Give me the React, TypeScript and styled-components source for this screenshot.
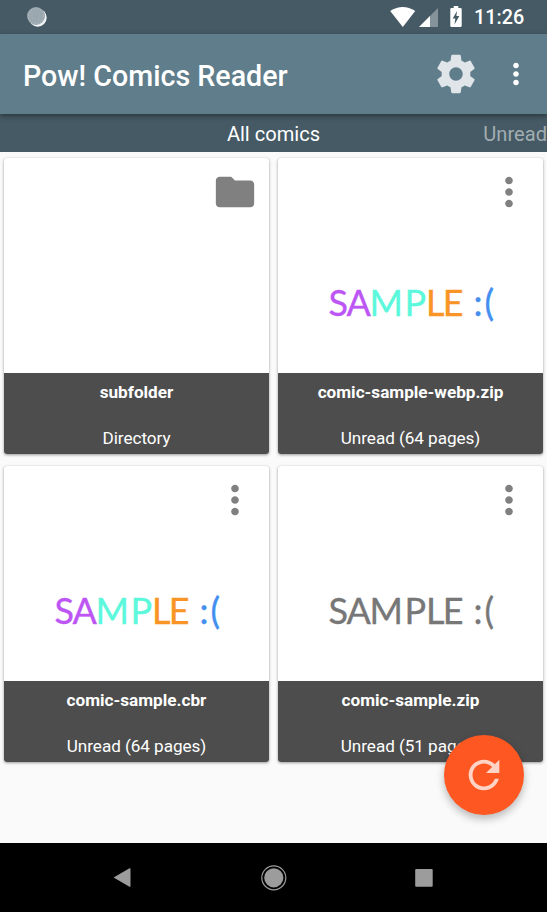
import React from 'react';
import styled, { createGlobalStyle } from 'styled-components';

const GlobalStyle = createGlobalStyle`
  * { box-sizing: border-box; }
  body { margin: 0; background: #fafafa; font-family: Roboto, sans-serif; overflow: hidden; }
  svg { display: block; }
`;

const Screen = styled.div`
  width: 547px;
  height: 912px;
  display: flex;
  flex-direction: column;
  background: #fafafa;
`;

const StatusBar = styled.header`
  height: 34px;
  flex: none;
  display: flex;
  align-items: center;
  padding: 0 23px 0 26px;
  background: #455a64;
  color: #fff;
`;

const StatusIcons = styled.div`
  margin-left: auto;
  display: flex;
`;

const Clock = styled.span`
  width: 50px;
  margin-left: 11px;
  font-size: 19.8px;
  font-weight: 500;
  line-height: 34px;
  white-space: nowrap;
  padding-top: 2px;
`;

const Toolbar = styled.div`
  height: 80px;
  flex: none;
  display: flex;
  align-items: center;
  padding: 0 14.5px 0 23px;
  background: #607d8b;
  color: #fff;
  box-shadow: 0 2px 5px rgba(0, 0, 0, 0.4);
  z-index: 1;
`;

const Title = styled.h1`
  margin: 4px auto 0 0;
  font-size: 28.65px;
  font-weight: 500;
  line-height: 36px;
  white-space: nowrap;
`;

const IconButton = styled.button<{ $gap?: number }>`
  border: 0;
  padding: 0;
  margin: 0 0 0 ${(p) => p.$gap ?? 0}px;
  background: none;
  color: inherit;
`;

const TabStrip = styled.nav`
  height: 38.4px;
  flex: none;
  display: grid;
  grid-template-columns: 1fr auto 1fr;
  align-items: center;
  background: #455a64;
  overflow: hidden;
`;

const Tab = styled.span<{ $active?: boolean }>`
  font-size: 20.1px;
  line-height: 24px;
  padding-top: 2px;
  white-space: nowrap;
  color: ${(p) => (p.$active ? '#fff' : '#a2adb2')};
  justify-self: end;
`;

const Library = styled.main`
  flex: 1;
  min-height: 0;
  display: grid;
  grid-template-columns: 265px 265px;
  grid-auto-rows: 296.4px;
  gap: 11.6px 9px;
  padding: 5.6px 4px 0;
`;

const Card = styled.article`
  display: flex;
  flex-direction: column;
  border-radius: 3px;
  overflow: hidden;
  background: #fff;
  box-shadow: 0 1px 3px rgba(0, 0, 0, 0.38), 0 0 1px rgba(0, 0, 0, 0.12);
`;

const Cover = styled.div`
  height: 215.3px;
  flex: none;
  display: flex;
  flex-direction: column;
  color: #808080;
`;

const CardAction = styled.div`
  align-self: flex-end;
  margin: 11.3px 11.4px 0 0;
`;

const Artwork = styled.svg`
  width: 180px;
  height: 50px;
  margin: 61.7px auto 0;
  font-family: Lato, sans-serif;
  font-size: 36px;
`;

const Caption = styled.div`
  flex: 1;
  display: flex;
  flex-direction: column;
  align-items: center;
  justify-content: space-between;
  padding: 8.7px 0 5.4px;
  background: #4d4d4d;
  color: #fff;
  font-size: 17.15px;
  line-height: 21px;
  white-space: nowrap;
`;

const FileName = styled.strong`
  font-weight: 700;
`;

const Status = styled.span`
  letter-spacing: -0.06px;
`;

const Fab = styled.button`
  position: absolute;
  left: 444px;
  top: 735px;
  width: 80px;
  height: 80px;
  display: grid;
  place-items: center;
  border: 0;
  padding: 0;
  border-radius: 50%;
  background: #ff5722;
  color: #ffd3c5;
  box-shadow: 0 4px 8px rgba(0, 0, 0, 0.27);
  z-index: 2;
`;

const NavBar = styled.footer`
  height: 68.6px;
  flex: none;
  display: flex;
  justify-content: center;
  align-items: center;
  gap: 124px;
  background: #000;
  color: #9c9c9c;
`;

function Icon({ size, d }: { size: number; d: string }) {
  return (
    <svg width={size} height={size} viewBox="0 0 24 24" fill="currentColor">
      <path d={d} />
    </svg>
  );
}

const GEAR =
  'M19.43 12.98c.04-.32.07-.64.07-.98s-.03-.66-.07-.98l2.11-1.65c.19-.15.24-.42.12-.64l-2-3.46c-.12-.22-.39-.3-.61-.22l-2.49 1c-.52-.4-1.08-.73-1.69-.98l-.38-2.65C14.46 2.18 14.25 2 14 2h-4c-.25 0-.46.18-.49.42l-.38 2.65c-.61.25-1.17.59-1.69.98l-2.49-1c-.23-.09-.49 0-.61.22l-2 3.46c-.13.22-.07.49.12.64l2.11 1.65c-.04.32-.07.65-.07.98s.03.66.07.98l-2.11 1.65c-.19.15-.24.42-.12.64l2 3.46c.12.22.39.3.61.22l2.49-1c.52.4 1.08.73 1.69.98l.38 2.65c.03.24.24.42.49.42h4c.25 0 .46-.18.49-.42l.38-2.65c.61-.25 1.17-.59 1.69-.98l2.49 1c.23.09.49 0 .61-.22l2-3.46c.12-.22.07-.49-.12-.64l-2.11-1.65zM12 15.5c-1.93 0-3.5-1.57-3.5-3.5s1.57-3.5 3.5-3.5 3.5 1.57 3.5 3.5-1.57 3.5-3.5 3.5z';
const MORE =
  'M12 8c1.1 0 2-.9 2-2s-.9-2-2-2-2 .9-2 2 .9 2 2 2zm0 2c-1.1 0-2 .9-2 2s.9 2 2 2 2-.9 2-2-.9-2-2-2zm0 6c-1.1 0-2 .9-2 2s.9 2 2 2 2-.9 2-2-.9-2-2-2z';
const FOLDER = 'M10 4H4c-1.1 0-1.99.9-1.99 2L2 18c0 1.1.9 2 2 2h16c1.1 0 2-.9 2-2V8c0-1.1-.9-2-2-2h-8l-2-2z';
const REFRESH =
  'M17.65 6.35C16.2 4.9 14.21 4 12 4c-4.42 0-7.99 3.58-7.99 8s3.57 8 7.99 8c3.73 0 6.84-2.55 7.73-6h-2.08c-.82 2.33-3.04 4-5.65 4-3.31 0-6-2.69-6-6s2.69-6 6-6c1.66 0 3.14.69 4.22 1.78L13 11h7V4l-2.35 2.35z';

const COLORED = ['#bd55f5', '#5cf8dc', '#f99526', '#438ff0'];
const GRAY = ['#777', '#777', '#777', '#777'];

function SampleArt({ colors }: { colors: string[] }) {
  return (
    <Artwork viewBox="0 0 180 50">
      <text y="39.2" strokeWidth="0.35">
        <tspan x="7.5 25.5" fill={colors[0]} stroke={colors[0]}>SA</tspan>
        <tspan x="48.5 83.5" fill={colors[1]} stroke={colors[1]}>MP</tspan>
        <tspan x="105 121.7" fill={colors[2]} stroke={colors[2]}>LE</tspan>
        <tspan x="152.5 163.5" fill={colors[3]} stroke={colors[3]}>:(</tspan>
      </text>
    </Artwork>
  );
}

interface Item {
  name: string;
  status: string;
  art?: string[];
}

const ITEMS: Item[] = [
  { name: 'subfolder', status: 'Directory' },
  { name: 'comic-sample-webp.zip', status: 'Unread (64 pages)', art: COLORED },
  { name: 'comic-sample.cbr', status: 'Unread (64 pages)', art: COLORED },
  { name: 'comic-sample.zip', status: 'Unread (51 pages)', art: GRAY },
];

export default function App() {
  return (
    <>
      <GlobalStyle />
      <Screen>
        <StatusBar>
          <svg width="22" height="22" viewBox="0 0 22 22">
            <circle cx="11.7" cy="11.7" r="9" fill="#f2f5f6" />
            <circle cx="10" cy="10" r="9" fill="#9aa7ae" />
            <circle cx="10" cy="10" r="7.5" fill="none" stroke="#a8b4ba" strokeWidth="1.5" strokeDasharray="1.5 1.5" />
            <circle cx="10" cy="10" r="4" fill="none" stroke="#a2aeb5" strokeWidth="1.5" strokeDasharray="1.5 1.5" />
          </svg>
          <StatusIcons>
            <svg width="74" height="22" viewBox="0 0 74 22" fill="#fff">
              <path d="M1.2 5Q13.8-3 26.2 5L13.8 21z" />
              <path d="M49 2v19H30z" opacity=".35" />
              <path d="M41 10v11H30z" />
              <path
                fillRule="evenodd"
                d="M64.7 0h4.6v2h2.2q1.2 0 1.2 1.2v16.6q0 1.2-1.2 1.2h-9q-1.2 0-1.2-1.2V3.2q0-1.2 1.2-1.2h2.2zM68 5l-4.3 7.6h2.6l-.8 5.9 4.8-8.6h-2.9z"
              />
            </svg>
          </StatusIcons>
          <Clock>11:26</Clock>
        </StatusBar>
        <Toolbar>
          <Title>Pow! Comics Reader</Title>
          <IconButton aria-label="Settings">
            <svg width="46" height="46" viewBox="0 0 24 24" fill="#dfe5e8">
              <path d={GEAR} />
            </svg>
          </IconButton>
          <IconButton aria-label="More options" $gap={20}>
            <Icon size={34} d={MORE} />
          </IconButton>
        </Toolbar>
        <TabStrip>
          <span />
          <Tab $active>All comics</Tab>
          <Tab>Unread</Tab>
        </TabStrip>
        <Library>
          {ITEMS.map((item) => (
            <Card key={item.name}>
              <Cover>
                <CardAction>
                  <Icon size={46} d={item.art ? MORE : FOLDER} />
                </CardAction>
                {item.art && <SampleArt colors={item.art} />}
              </Cover>
              <Caption>
                <FileName>{item.name}</FileName>
                <Status>{item.status}</Status>
              </Caption>
            </Card>
          ))}
        </Library>
        <NavBar>
          <svg width="26" height="26" viewBox="0 0 26 26" fill="currentColor">
            <path d="M3 12.2 18.5 3.3q1-.4 1 .5v17.4q0 1-1 .5L3 12.8q-.5-.3 0-.6z" />
          </svg>
          <svg width="26" height="26" viewBox="0 0 26 26">
            <circle cx="12.8" cy="12.8" r="12" fill="none" stroke="currentColor" strokeWidth="1.2" />
            <circle cx="12.8" cy="12.8" r="9.6" fill="currentColor" />
          </svg>
          <svg width="26" height="26" viewBox="0 0 26 26" fill="currentColor">
            <rect x="4.2" y="4" width="17.5" height="17.8" rx="1" />
          </svg>
        </NavBar>
      </Screen>
      <Fab aria-label="Refresh">
        <Icon size={46} d={REFRESH} />
      </Fab>
    </>
  );
}
